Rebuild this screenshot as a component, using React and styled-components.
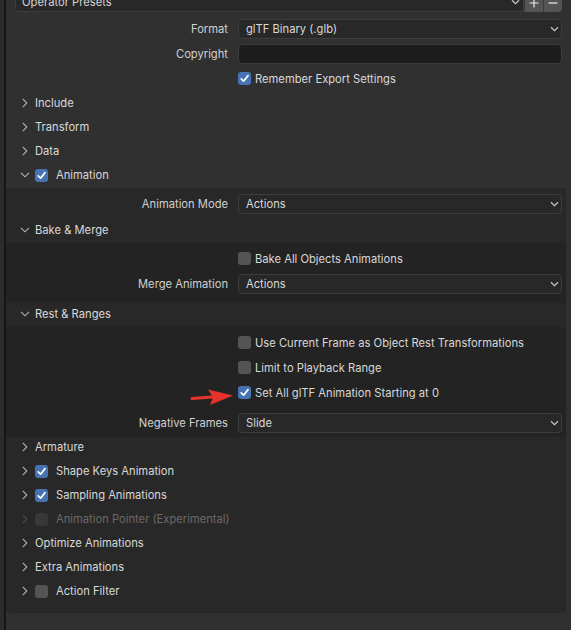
import React from 'react'
import styled, { createGlobalStyle } from 'styled-components'

const GlobalStyle = createGlobalStyle`
  html, body {
    margin: 0;
    padding: 0;
    background: #303030;
  }
  body {
    font-family: Inter, "Noto Sans", "DejaVu Sans", sans-serif;
  }
`

const Window = styled.div`
  display: flex;
  position: relative;
  width: 571px;
  height: 630px;
  overflow: hidden;
  background: #303030;
  color: #d4d4d4;
  font-size: 11.2px;
`

const EdgeStrip = styled.div`
  flex: none;
  width: 4px;
  background: #2c2c2c;
  border-right: 2px solid #161616;
`

const Region = styled.div`
  display: flex;
  flex: 1;
  flex-direction: column;
  min-width: 0;
  padding-right: 5px;

  & > * {
    flex-shrink: 0;
  }
`

const PresetRow = styled.div`
  display: flex;
  height: 20px;
  margin: -8px 4px 4px 9px;
`

const PresetField = styled.div`
  display: flex;
  flex: 1;
  align-items: center;
  justify-content: space-between;
  box-sizing: border-box;
  padding: 0 3px 0 6px;
  background: #282828;
  border: 1px solid #3d3d3d;
  border-radius: 0 0 0 4px;
  color: #d4d4d4;
`

const PresetButton = styled.div`
  display: flex;
  align-items: center;
  justify-content: center;
  width: 19px;
  padding-top: 2px;
  box-sizing: border-box;
  background: #545454;
  border-left: 1px solid #3a3a3a;
  border-radius: ${p => (p.$last ? '0 0 4px 0' : '0')};
`

const PropRow = styled.div`
  display: grid;
  grid-template-columns: 222px 1fr;
  column-gap: 10px;
  align-items: center;
  height: 25px;
  padding-right: 4px;
  margin-top: ${p => p.$gap || 0}px;
`

const Label = styled.div`
  text-align: right;
  white-space: nowrap;
  color: #d0d0d0;
`

const Dropdown = styled.div`
  display: flex;
  align-items: center;
  justify-content: space-between;
  box-sizing: border-box;
  height: 20px;
  padding: 0 2px 0 7px;
  background: #282828;
  border: 1px solid #3d3d3d;
  border-radius: 4px;
  color: #d8d8d8;
`

const TextField = styled.div`
  box-sizing: border-box;
  height: 20px;
  background: #1d1d1d;
  border: 1px solid #3a3a3a;
  border-radius: 4px;
`

const CheckLine = styled.div`
  display: flex;
  align-items: center;
  gap: 4px;
  white-space: nowrap;
  color: #d8d8d8;
`

const Box = styled.div`
  display: flex;
  flex: none;
  align-items: center;
  justify-content: center;
  width: 13px;
  height: 13px;
  border-radius: 3px;
  background: ${p => (p.$on ? '#4772b3' : p.$disabled ? '#383838' : '#545454')};
`

const Header = styled.div`
  display: flex;
  flex: none;
  align-items: center;
  height: ${p => p.$h || 24}px;
  padding: 0 0 ${p => p.$pb || 0}px 12px;
  color: ${p => (p.$disabled ? '#6a6a6a' : '#d8d8d8')};
  white-space: nowrap;
`

const ChevronSlot = styled.div`
  display: flex;
  flex: none;
  align-items: center;
  justify-content: center;
  width: 13px;
  margin-right: 4px;
`

const HeaderBox = styled(Box)`
  margin-right: 8px;
`

const Panel = styled.div`
  display: flex;
  flex-direction: column;
  margin-top: 1px;
  padding: 3px 0 8px;
  background: #282828;
  border-radius: 0 0 4px 4px;
`

const SubContent = styled.div`
  display: flex;
  flex-direction: column;
  padding: ${p => p.$pt}px 0 ${p => p.$pb}px;
  background: #232323;
`

const Annotation = styled.svg`
  position: absolute;
  left: 188px;
  top: 386px;
`

const Check = () => (
  <svg width="13" height="13" viewBox="0 0 13 13">
    <polyline points="3.2,6.8 5.6,9.2 10,3.6" fill="none" stroke="#fff" strokeWidth="1.7" strokeLinecap="round" strokeLinejoin="round" />
  </svg>
)

const CheckBox = ({ on, disabled, header }) => {
  const B = header ? HeaderBox : Box
  return <B $on={on} $disabled={disabled}>{on && <Check />}</B>
}

const Chevron = ({ open, color = '#b4b4b4' }) => (
  open ? (
    <svg width="10" height="6" viewBox="0 0 10 6">
      <polyline points="1,0.8 5,4.8 9,0.8" fill="none" stroke={color} strokeWidth="1.1" />
    </svg>
  ) : (
    <svg width="6" height="10" viewBox="0 0 6 10">
      <polyline points="0.8,0.8 4.8,5 0.8,9.2" fill="none" stroke={color} strokeWidth="1.1" />
    </svg>
  )
)

const SmallDown = () => (
  <svg width="9" height="6" viewBox="0 0 9 6">
    <polyline points="1,1.2 4.5,4.6 8,1.2" fill="none" stroke="#c8c8c8" strokeWidth="1.2" />
  </svg>
)

const PlusIcon = () => (
  <svg width="10" height="10" viewBox="0 0 10 10">
    <path d="M0.5 5H9.5M5 0.5V9.5" stroke="#ececec" strokeWidth="1.2" />
  </svg>
)

const MinusIcon = () => (
  <svg width="10" height="10" viewBox="0 0 10 10">
    <path d="M0.5 5H9.5" stroke="#ececec" strokeWidth="1.2" />
  </svg>
)

const SectionHeader = ({ title, open, check, disabled, h, pb }) => (
  <Header $disabled={disabled} $h={h} $pb={pb}>
    <ChevronSlot>
      <Chevron open={open} color={disabled ? '#4c4c4c' : '#b4b4b4'} />
    </ChevronSlot>
    {check !== undefined && <CheckBox on={check} disabled={disabled} header />}
    {title}
  </Header>
)

const EnumProp = ({ label, value, gap }) => (
  <PropRow $gap={gap}>
    <Label>{label}</Label>
    <Dropdown>
      <span>{value}</span>
      <SmallDown />
    </Dropdown>
  </PropRow>
)

const BoolProp = ({ text, on }) => (
  <PropRow>
    <span />
    <CheckLine>
      <CheckBox on={on} />
      {text}
    </CheckLine>
  </PropRow>
)

const tailRow = { h: 20, pb: 4 }

const App = () => (
  <Window>
    <GlobalStyle />
    <EdgeStrip />
    <Region>
      <PresetRow>
        <PresetField>
          <span>Operator Presets</span>
          <SmallDown />
        </PresetField>
        <PresetButton><PlusIcon /></PresetButton>
        <PresetButton $last><MinusIcon /></PresetButton>
      </PresetRow>

      <EnumProp label="Format" value="glTF Binary (.glb)" />
      <PropRow>
        <Label>Copyright</Label>
        <TextField />
      </PropRow>
      <BoolProp text="Remember Export Settings" on />

      <SectionHeader title="Include" />
      <SectionHeader title="Transform" />
      <SectionHeader title="Data" />
      <SectionHeader title="Animation" open check />

      <Panel>
        <EnumProp label="Animation Mode" value="Actions" />
        <SectionHeader title="Bake & Merge" open h={27} />
        <SubContent $pt={3} $pb={7}>
          <BoolProp text="Bake All Objects Animations" />
          <EnumProp label="Merge Animation" value="Actions" />
        </SubContent>
        <SectionHeader title="Rest & Ranges" open h={21} pb={3} />
        <SubContent $pt={3} $pb={2}>
          <BoolProp text="Use Current Frame as Object Rest Transformations" />
          <BoolProp text="Limit to Playback Range" />
          <BoolProp text="Set All glTF Animation Starting at 0" on />
          <EnumProp label="Negative Frames" value="Slide" gap={5} />
        </SubContent>
        <SectionHeader title="Armature" {...tailRow} />
        <SectionHeader title="Shape Keys Animation" check {...tailRow} />
        <SectionHeader title="Sampling Animations" check {...tailRow} />
        <SectionHeader title="Animation Pointer (Experimental)" check={false} disabled {...tailRow} />
        <SectionHeader title="Optimize Animations" {...tailRow} />
        <SectionHeader title="Extra Animations" {...tailRow} />
        <SectionHeader title="Action Filter" check={false} {...tailRow} />
      </Panel>
    </Region>

    <Annotation width="50" height="24" viewBox="0 0 50 24">
      <line x1="4" y1="12.6" x2="24" y2="11" stroke="#e8332c" strokeWidth="3" strokeLinecap="round" />
      <polygon points="20,3.5 45,9.5 22,19 25,11.4" fill="#e8332c" />
    </Annotation>
  </Window>
)

export default App
